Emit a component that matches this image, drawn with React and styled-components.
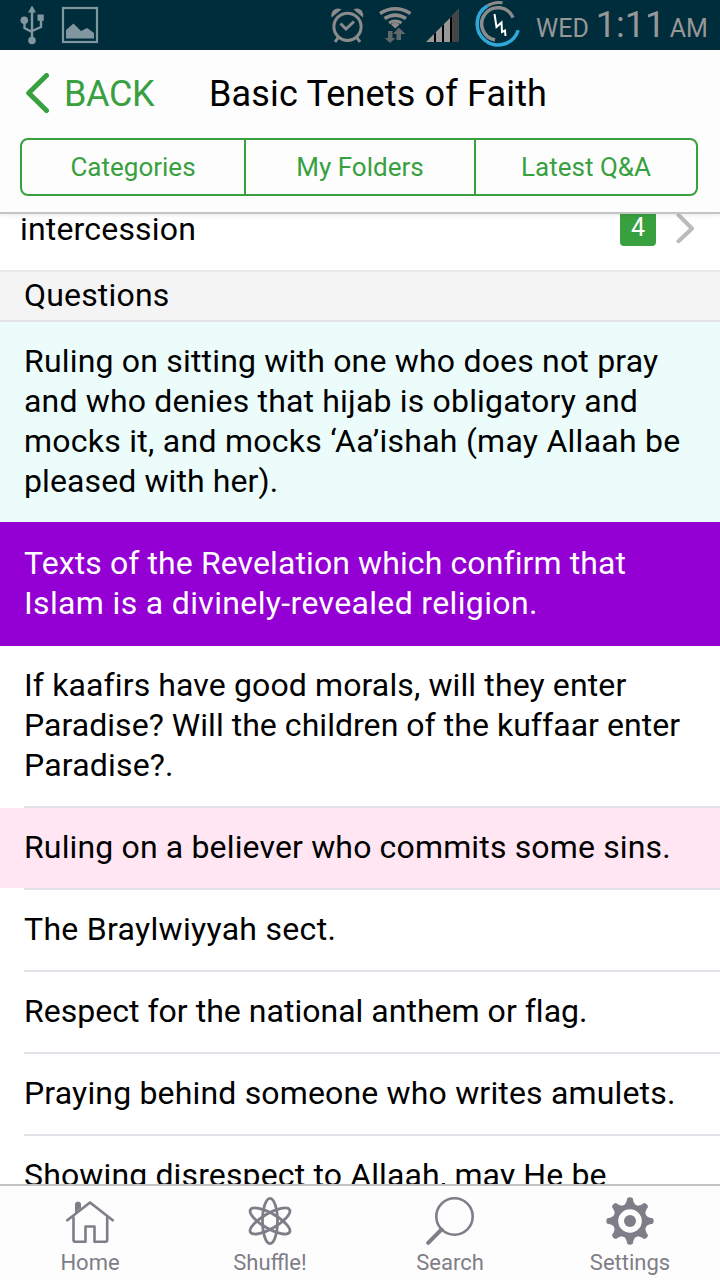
import React from 'react'
import styled, { createGlobalStyle } from 'styled-components'

const GlobalStyle = createGlobalStyle`
    * {
        box-sizing: border-box;
    }

    body {
        margin: 0;
        background-color: #FFFFFF;
        font-family: 'Roboto', sans-serif;
    }
`;

const Screen = styled.div`
    display: flex;
    flex-direction: column;
    width: 720px;
    height: 1280px;
    overflow: hidden;
    color: #000000;
`;

const StatusBar = styled.div`
    display: flex;
    flex-shrink: 0;
    justify-content: space-between;
    height: 50px;
    background-color: #002D3C;
`;

const StatusGroup = styled.div`
    display: flex;
`;

const Clock = styled.div`
    display: flex;
    align-items: baseline;
    width: 190px;
    height: 50px;
    padding-left: 6px;
    font-size: 25px;
    line-height: 56px;
    color: #979797;
    white-space: pre;
`;

const ClockTime = styled.span`
    width: 69px;
    margin-left: 7px;
    margin-right: 5px;
    font-size: 36px;
    font-weight: 400;
    line-height: 50px;
`;

const Header = styled.header`
    flex-shrink: 0;
    height: 164px;
    background-color: #FDFDFD;
    border-bottom: 2px solid #C4C4C4;
    box-shadow: 0 1px 4px rgba(0, 0, 0, 0.1);
    z-index: 1;
`;

const TitleBar = styled.div`
    display: flex;
    align-items: center;
    height: 88px;
    padding-left: 24px;
`;

const BackButton = styled.button`
    display: flex;
    align-items: center;
    gap: 13px;
    width: 185px;
    padding: 0;
    border: none;
    background: none;
    font-family: inherit;
    font-size: 36px;
    letter-spacing: -0.4px;
    color: #38A03F;
`;

const Title = styled.h1`
    margin: 0;
    font-size: 36px;
    font-weight: 400;
    letter-spacing: 0.16px;
`;

const Tabs = styled.nav`
    display: grid;
    grid-template-columns: 224px 230px 1fr;
    width: 678px;
    height: 58px;
    margin-left: 20px;
    border: 2px solid #38A03F;
    border-radius: 8px;
`;

const Tab = styled.button`
    padding: 0;
    border: none;
    border-right: ${(props) => (props.$last ? 'none' : '2px solid #38A03F')};
    background: none;
    font-family: inherit;
    font-size: 26px;
    color: #38A03F;
`;

const Content = styled.main`
    flex: 1;
    min-height: 0;
    overflow: hidden;
`;

const TopicRow = styled.div`
    display: flex;
    height: 58px;
    padding-left: 20px;
    border-bottom: 2px solid #E8E8E8;
`;

const TopicName = styled.div`
    flex: 1;
    font-size: 32px;
    line-height: 40px;
    letter-spacing: 0.18px;
    margin-top: -5px;
`;

const Badge = styled.div`
    width: 36px;
    height: 38px;
    margin-top: -6px;
    margin-right: 20px;
    border-radius: 4px;
    background-color: #38A03F;
    color: #FFFFFF;
    font-size: 25px;
    line-height: 39px;
    text-align: center;
`;

const SectionTitle = styled.h2`
    height: 50px;
    margin: 0;
    padding-left: 24px;
    border-bottom: 2px solid #E4E2EA;
    background-color: #F4F4F4;
    font-size: 32px;
    font-weight: 400;
    line-height: 46px;
    letter-spacing: 0.18px;
`;

const Question = styled.div`
    padding: 19px 0 21px 24px;
    background-color: ${(props) => props.$bg || '#FFFFFF'};
    color: ${(props) => props.$color || '#000000'};
    font-size: 32px;
    line-height: 40px;
`;

const QuestionLine = styled.div`
    letter-spacing: ${(props) => props.$spacing}px;
    white-space: nowrap;
`;

const Divider = styled.div`
    height: 2px;
    margin-left: ${(props) => (props.$color ? '0' : '24px')};
    background-color: ${(props) => props.$color || '#E3E2E9'};
`;

const BottomBar = styled.nav`
    display: grid;
    grid-template-columns: repeat(4, 1fr);
    flex-shrink: 0;
    height: 96px;
    border-top: 2px solid #C4C4C4;
    background-color: #FDFDFD;
    z-index: 1;
`;

const BottomItem = styled.div`
    display: flex;
    flex-direction: column;
    align-items: center;
    padding-top: 11px;
    font-size: 22px;
    line-height: 30px;
    color: #7F7D87;

    svg {
        margin-bottom: 3px;
    }
`;

const UsbAndPicture = () => (
  <svg width="110" height="50" fill="none" stroke="#80979F" strokeWidth="2.4">
    <path d="M32 10V38M32 32L24.5 28V20M32 31L41 27V19" />
    <path d="M32 5.500L36 12.500H28Z" fill="#80979F" stroke="none" />
    <circle cx="32" cy="40.500" r="3.800" fill="#80979F" stroke="none" />
    <circle cx="24.300" cy="20.300" r="3.800" fill="#80979F" stroke="none" />
    <rect x="37.500" y="14.500" width="6.300" height="6.300" fill="#80979F" stroke="none" />
    <rect x="63" y="8" width="34" height="34" strokeWidth="2.200" />
    <path d="M66 38.500V30L73.500 23.500L81 31L87 28L94 33V38.500Z" fill="#80979F" stroke="none" />
  </svg>
)

const SystemIcons = () => (
  <svg width="210" height="50" viewBox="320 0 210 50" fill="none">
    <g stroke="#8B8B8B" strokeWidth="3">
      <circle cx="347.500" cy="26.800" r="13.600" />
      <path d="M340.500 23.500L346 29L354 21.500" />
      <path d="M338.500 37L335 42M356.500 37L360 42" />
    </g>
    <g fill="#8B8B8B">
      <path d="M331.500 17.500C330 11 336 6.500 341.500 9.500Z" />
      <path d="M363 17.500C364.500 11 359 6.500 353.500 9.500Z" />
    </g>
    <g stroke="#8B8B8B" strokeWidth="3.600">
      <path d="M380 13.500Q395.300 4 410.500 13.500" />
      <path d="M384.500 18.600Q395.300 11.500 406 18.600" />
      <path d="M389 23Q395.300 19 401.500 23" strokeWidth="3" />
    </g>
    <path d="M391 24.500Q395.300 20.500 399.600 24.500L395.300 28.500Z" fill="#8B8B8B" />
    <g fill="#5F686B">
      <path d="M388 31H392.500V38H395.500L390 43L384.800 38H388Z" />
      <path d="M396.500 40H401V34H405.500L398.800 27.500L393 34H396.500Z" />
    </g>
    <path d="M426 42L459 9V42Z" fill="#989898" />
    <path d="M434 34L436 32V42H434ZM442 26L444 24V42H442ZM450 18L452.500 15.500V42H450Z" fill="#000000" />
    <path d="M452.500 15.500L459 9V42H452.500Z" fill="#444444" />
    <path d="M487.500 5.800A21 21 0 1 0 518.200 30.300" stroke="#2FA9DA" strokeWidth="3.500" />
    <path d="M487.500 5.800A21 21 0 0 1 502.500 2.800" stroke="#8B8B8B" strokeWidth="3" />
    <path d="M513 17.600A16.300 16.300 0 1 0 495 40" stroke="#8B8B8B" strokeWidth="3.500" />
    <path d="M494.500 14L496.500 27L501.500 22.500L502 32L505 30.500L505.500 36" stroke="#FFFFFF" strokeWidth="2" />
  </svg>
)

const BackChevron = () => (
  <svg width="27" height="42" viewBox="0 0 27 42" fill="none" stroke="#38A03F" strokeWidth="5" strokeLinecap="round" strokeLinejoin="round">
    <path d="M22.500 2.500L4.700 20L22.500 37.500" />
  </svg>
)

const RowChevron = () => (
  <svg width="44" height="40" viewBox="0 0 44 40" fill="none" stroke="#BBBBBB" strokeWidth="4" strokeLinecap="round" strokeLinejoin="round">
    <path d="M2.500 1L16 14.500L2.500 27.200" />
  </svg>
)

const HomeIcon = () => (
  <svg width="48" height="48" fill="none" stroke="#7F7D87" strokeWidth="2.600" strokeLinecap="round" strokeLinejoin="round">
    <path d="M1.300 23.300L24 5.500L46.700 23.300" />
    <path d="M7.500 20.500V43Q7.500 44.700 9.200 44.700H19.500V29.500H28.500V44.700H39.500Q41.200 44.700 41.200 43V20.500" />
    <path d="M9.500 15V7Q9.500 5 12 5T14.500 7V11Z" fill="#7F7D87" strokeWidth="1" />
  </svg>
)

const ShuffleIcon = () => (
  <svg width="48" height="48" fill="none" stroke="#7F7D87" strokeWidth="2.800">
    <ellipse cx="24" cy="24" rx="7.500" ry="22.600" />
    <ellipse cx="24" cy="24" rx="7.500" ry="22.600" transform="rotate(60 24 24)" />
    <ellipse cx="24" cy="24" rx="7.500" ry="22.600" transform="rotate(120 24 24)" />
  </svg>
)

const SearchIcon = () => (
  <svg width="48" height="48" fill="none" stroke="#7F7D87" strokeLinecap="round">
    <circle cx="28.500" cy="19.500" r="18.200" strokeWidth="2.600" />
    <path d="M15.500 32.500L2.200 45.800" strokeWidth="4" />
  </svg>
)

const SettingsIcon = () => (
  <svg width="48" height="48" fill="#7F7D87">
    {[0, 45, 90, 135, 180, 225, 270, 315].map((angle) => (
      <path key={angle} d="M16.500 9Q20.500 7.500 21.200 1.300Q24 -0.700 26.800 1.300Q27.500 7.500 31.500 9L24 12Z" transform={`rotate(${angle} 24 24)`} />
    ))}
    <circle cx="24" cy="24" r="14.300" fill="none" stroke="#7F7D87" strokeWidth="5" />
    <circle cx="24" cy="24" r="6" />
  </svg>
)

const questions = [
  {
    lines: [
      ['Ruling on sitting with one who does not pray', 0.19],
      ['and who denies that hijab is obligatory and', 0.18],
      ['mocks it, and mocks ‘Aa’ishah (may Allaah be', 0.26],
      ['pleased with her).', 0.1],
    ],
    bg: '#EBFCFB',
    divider: '#9400D3',
  },
  {
    lines: [
      ['Texts of the Revelation which confirm that', 0.1],
      ['Islam is a divinely-revealed religion.', 0.35],
    ],
    bg: '#9400D3',
    color: '#FFFFFF',
    divider: '#9400D3',
  },
  {
    lines: [
      ['If kaafirs have good morals, will they enter', 0.12],
      ['Paradise? Will the children of the kuffaar enter', 0.04],
      ['Paradise?.', 0.18],
    ],
  },
  { lines: [['Ruling on a believer who commits some sins.', 0.15]], bg: '#FFE6F2' },
  { lines: [['The Braylwiyyah sect.', 0.3]] },
  { lines: [['Respect for the national anthem or flag.', 0.02]] },
  { lines: [['Praying behind someone who writes amulets.', 0.17]] },
  { lines: [['Showing disrespect to Allaah, may He be', 0.14]] },
]

const App = () => {
  return (
    <>
        <GlobalStyle />
        <Screen>
            <StatusBar>
                <UsbAndPicture />
                <StatusGroup>
                    <SystemIcons />
                    <Clock>WED<ClockTime>1:11</ClockTime>AM</Clock>
                </StatusGroup>
            </StatusBar>

            <Header>
                <TitleBar>
                    <BackButton>
                        <BackChevron />
                        BACK
                    </BackButton>
                    <Title>Basic Tenets of Faith</Title>
                </TitleBar>
                <Tabs>
                    <Tab>Categories</Tab>
                    <Tab>My Folders</Tab>
                    <Tab $last>Latest Q&amp;A</Tab>
                </Tabs>
            </Header>

            <Content>
                <TopicRow>
                    <TopicName>intercession</TopicName>
                    <Badge>4</Badge>
                    <RowChevron />
                </TopicRow>
                <SectionTitle>Questions</SectionTitle>
                {questions.map((question, index) => (
                    <React.Fragment key={index}>
                        <Question $bg={question.bg} $color={question.color}>
                            {question.lines.map(([text, spacing]) => (
                                <QuestionLine key={text} $spacing={spacing}>{text}</QuestionLine>
                            ))}
                        </Question>
                        <Divider $color={question.divider} />
                    </React.Fragment>
                ))}
            </Content>

            <BottomBar>
                <BottomItem><HomeIcon />Home</BottomItem>
                <BottomItem><ShuffleIcon />Shuffle!</BottomItem>
                <BottomItem><SearchIcon />Search</BottomItem>
                <BottomItem><SettingsIcon />Settings</BottomItem>
            </BottomBar>
        </Screen>
    </>
  )
}

export default App
